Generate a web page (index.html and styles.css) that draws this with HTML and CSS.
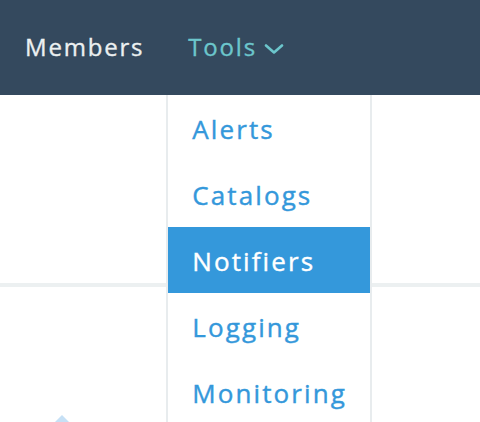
FILE: index.html
```html
<!DOCTYPE html>
<html>
<head>
<meta charset="utf-8">
<link rel="stylesheet" href="styles.css">
</head>
<body>
<nav class="topbar">
  <ul class="nav-list">
    <li class="nav-item"><a class="nav-link" href="#">Members</a></li>
    <li class="nav-item nav-item--open">
      <a class="nav-link nav-link--active" href="#">Tools
        <svg class="chevron" width="20" height="10" viewBox="0 0 20 10"><polyline points="2,1.5 10,8.5 18,1.5" fill="none" stroke="currentColor" stroke-width="2.6" stroke-linecap="round" stroke-linejoin="round"/></svg>
      </a>
      <ul class="dropdown">
        <li><a class="dropdown-link" href="#">Alerts</a></li>
        <li><a class="dropdown-link" href="#">Catalogs</a></li>
        <li><a class="dropdown-link dropdown-link--active" href="#">Notifiers</a></li>
        <li><a class="dropdown-link" href="#">Logging</a></li>
        <li><a class="dropdown-link" href="#">Monitoring</a></li>
      </ul>
    </li>
  </ul>
</nav>
<main class="content">
  <div class="upper"></div>
  <div class="lower">
    <span class="caret"></span>
  </div>
</main>
</body>
</html>
```

FILE: styles.css
```css
html, body {
  margin: 0;
  padding: 0;
  background: #ffffff;
  font-family: "Open Sans", "Noto Sans", sans-serif;
  overflow: hidden;
}

.topbar {
  background: #34495e;
  height: 95px;
}

.nav-list {
  list-style: none;
  margin: 0;
  padding: 0 0 0 3px;
  display: flex;
  height: 100%;
}

.nav-item {
  position: relative;
  display: flex;
  align-items: center;
  padding: 0 22px;
}

.nav-link {
  display: flex;
  align-items: center;
  color: #ecf0f1;
  text-decoration: none;
  font-size: 24px;
  font-weight: 400;
  letter-spacing: 1.8px;
  -webkit-text-stroke: 0.35px currentColor;
  padding-bottom: 2px;
}

.nav-link--active {
  color: #6cc6cc;
}

.chevron {
  margin-left: 7px;
  margin-top: 4px;
}

.dropdown {
  position: absolute;
  top: 100%;
  left: 0;
  width: 202px;
  margin: 0;
  padding: 0;
  list-style: none;
  background: #ffffff;
  border-left: 2px solid #e8ecee;
  border-right: 2px solid #e8ecee;
}

.dropdown-link {
  display: flex;
  align-items: center;
  height: 66px;
  padding-left: 24px;
  padding-top: 2px;
  box-sizing: border-box;
  color: #3498db;
  text-decoration: none;
  font-size: 26px;
  font-weight: 400;
  letter-spacing: 2.1px;
  -webkit-text-stroke: 0.4px currentColor;
}

.dropdown-link--active {
  background: #3498db;
  color: #ffffff;
}

.upper {
  height: 188px;
  border-bottom: 4px solid #ecf0f1;
}

.lower {
  padding: 128px 0 0 55px;
}

.caret {
  display: block;
  width: 0;
  height: 0;
  border-left: 7px solid transparent;
  border-right: 7px solid transparent;
  border-bottom: 7px solid #c6e0f5;
}
```
